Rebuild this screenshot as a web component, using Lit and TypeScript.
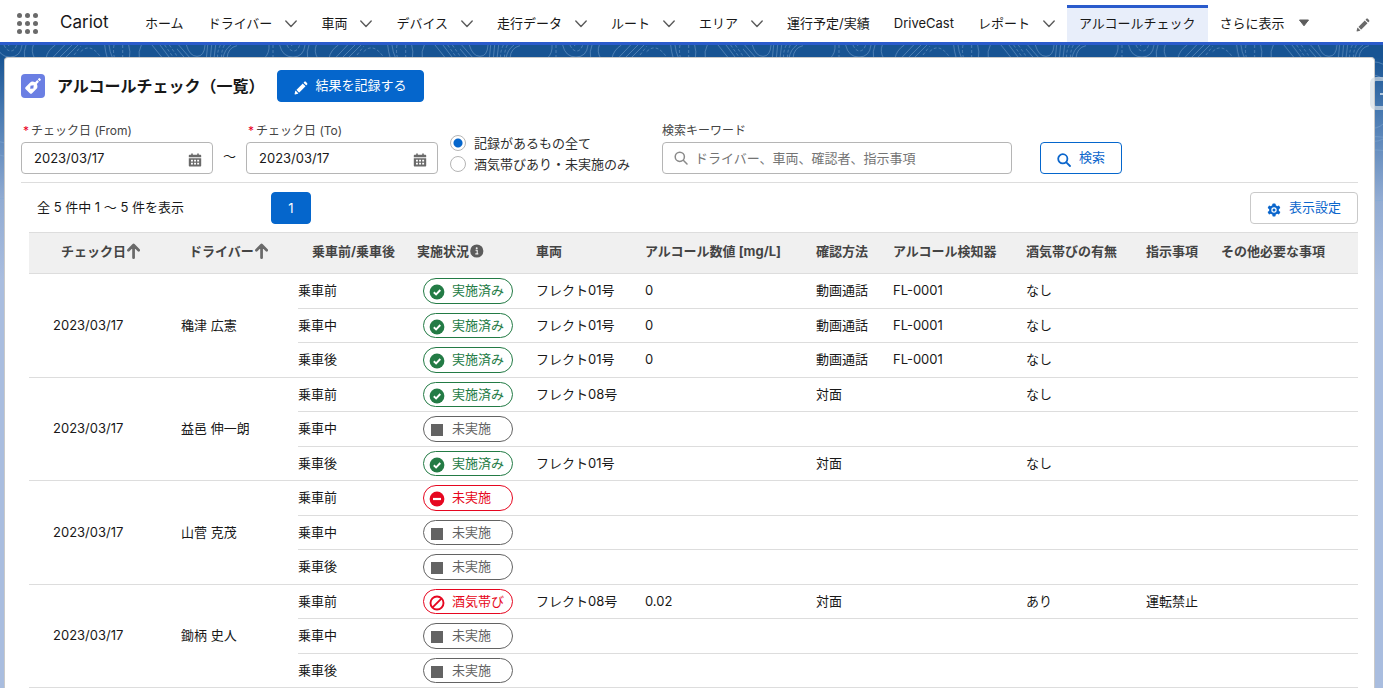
import { LitElement, html, css, svg, nothing } from "lit";
import { customElement, state } from "lit/decorators.js";

type Status = "done" | "none" | "missing" | "drunk";

interface Check {
  timing: string;
  status: Status;
  vehicle?: string;
  value?: string;
  method?: string;
  device?: string;
  drunk?: string;
  order?: string;
}

interface Group {
  date: string;
  driver: string;
  checks: Check[];
}

const STATUS_LABEL: Record<Status, string> = {
  done: "実施済み",
  none: "未実施",
  missing: "未実施",
  drunk: "酒気帯び",
};

const NAV: { label: string; menu?: boolean; active?: boolean }[] = [
  { label: "ホーム" },
  { label: "ドライバー", menu: true },
  { label: "車両", menu: true },
  { label: "デバイス", menu: true },
  { label: "走行データ", menu: true },
  { label: "ルート", menu: true },
  { label: "エリア", menu: true },
  { label: "運行予定/実績" },
  { label: "DriveCast" },
  { label: "レポート", menu: true },
  { label: "アルコールチェック", active: true },
];

const GROUPS: Group[] = [
  {
    date: "2023/03/17",
    driver: "穐津 広憲",
    checks: [
      { timing: "乗車前", status: "done", vehicle: "フレクト01号", value: "0", method: "動画通話", device: "FL-0001", drunk: "なし" },
      { timing: "乗車中", status: "done", vehicle: "フレクト01号", value: "0", method: "動画通話", device: "FL-0001", drunk: "なし" },
      { timing: "乗車後", status: "done", vehicle: "フレクト01号", value: "0", method: "動画通話", device: "FL-0001", drunk: "なし" },
    ],
  },
  {
    date: "2023/03/17",
    driver: "益邑 伸一朗",
    checks: [
      { timing: "乗車前", status: "done", vehicle: "フレクト08号", method: "対面", drunk: "なし" },
      { timing: "乗車中", status: "none" },
      { timing: "乗車後", status: "done", vehicle: "フレクト01号", method: "対面", drunk: "なし" },
    ],
  },
  {
    date: "2023/03/17",
    driver: "山菅 克茂",
    checks: [
      { timing: "乗車前", status: "missing" },
      { timing: "乗車中", status: "none" },
      { timing: "乗車後", status: "none" },
    ],
  },
  {
    date: "2023/03/17",
    driver: "鋤柄 史人",
    checks: [
      { timing: "乗車前", status: "drunk", vehicle: "フレクト08号", value: "0.02", method: "対面", drunk: "あり", order: "運転禁止" },
      { timing: "乗車中", status: "none" },
      { timing: "乗車後", status: "none" },
    ],
  },
];

const pencil = (cls: string) => html`<svg class=${cls} viewBox="0 0 52 52" aria-hidden="true">
  <path fill="currentColor" d="M9.5 33.4l8.9 8.9c.4.4 1 .4 1.4 0L42 20c.4-.4.4-1 0-1.4l-8.8-8.8c-.4-.4-1-.4-1.4 0L9.5 32.1c-.4.4-.4 1 0 1.3zM36.1 5.7c-.4.4-.4 1 0 1.4l8.8 8.8c.4.4 1 .4 1.4 0l2.5-2.5c1.6-1.5 1.6-3.9 0-5.5l-4.7-4.7c-1.6-1.6-4.1-1.6-5.7 0l-2.3 2.5zM2.1 48.2c-.2 1 .7 1.9 1.7 1.7l10.9-2.6c.4-.1.7-.3.9-.5l.2-.2c.2-.2.3-.9-.1-1.3l-9-9c-.4-.4-1.1-.3-1.3-.1l-.2.2c-.3.3-.4.6-.5.9L2.1 48.2z"/>
</svg>`;

const magnifier = (cls: string, weight: number) => html`<svg class=${cls} viewBox="0 0 14 14" aria-hidden="true">
  <g fill="none" stroke="currentColor" stroke-width=${weight} stroke-linecap="round">
    <circle cx="5.8" cy="5.8" r="4.6"/><path d="M9.3 9.3L13 13"/>
  </g>
</svg>`;

const calendar = html`<svg class="cal" viewBox="0 0 14 14" aria-hidden="true">
  <path fill="currentColor" d="M3.2.5h1.6v1.3h4.4V.5h1.6v1.3h1.4c.6 0 1 .4 1 1v1.4H.8V2.8c0-.6.4-1 1-1h1.4z"/>
  <path fill="currentColor" fill-rule="evenodd" d="M.8 5.3h12.4v7.2c0 .6-.4 1-1 1H1.8c-.6 0-1-.4-1-1zM3 6.8v1.7h1.9V6.8zm3.1 0v1.7H8V6.8zm3.1 0v1.7h1.9V6.8zM3 9.8v1.7h1.9V9.8zm3.1 0v1.7H8V9.8zm3.1 0v1.7h1.9V9.8z"/>
</svg>`;

const gear = html`<svg class="ico" viewBox="0 0 14 14" aria-hidden="true">
  <g fill="currentColor">
    ${[0, 60, 120].map((a) => svg`<rect x="5.4" y="0.4" width="3.2" height="13.2" rx="0.8" transform="rotate(${a} 7 7)"/>`)}
    <circle cx="7" cy="7" r="4.9"/>
  </g>
  <circle cx="7" cy="7" r="2.7" fill="#fff"/>
  <circle cx="7" cy="7" r="1.5" fill="currentColor"/>
</svg>`;

const chevron = html`<svg class="chev" viewBox="0 0 12 8" aria-hidden="true">
  <path d="M0.8 1L6 6.5L11.2 1" fill="none" stroke="currentColor" stroke-width="1.4" stroke-linecap="round" stroke-linejoin="round"/>
</svg>`;

const sortArrow = html`<svg class="sort" viewBox="0 0 12 14" aria-hidden="true">
  <path d="M6.500 12.800V2.200M2 6.300l4.500-4.500 4.500 4.500" fill="none" stroke="currentColor" stroke-width="2.400" stroke-linecap="round" stroke-linejoin="round"/>
</svg>`;

const info = html`<svg class="info" viewBox="0 0 14 14" aria-hidden="true">
  <circle cx="7.300" cy="7" r="6.600" fill="currentColor"/>
  <circle cx="7.200" cy="4.200" r="1" fill="#f0f0f0"/>
  <path d="M6 6.300h1.700v3.400M5.800 9.900h3" fill="none" stroke="#f0f0f0" stroke-width="1.100"/>
</svg>`;

const bottle = html`<svg class="object" viewBox="0 0 24 24" aria-hidden="true">
  <rect width="24" height="24" rx="4" fill="#6b7fe3"/>
  <g fill="#fff" transform="rotate(45 12 12)">
    <rect x="10.700" y="1.800" width="2.600" height="2.200" rx="0.600"/>
    <path d="M10.800 4.800h2.400v3c2.300.9 3.300 2.200 3.300 4v6c0 1-.6 1.600-1.600 1.600H9.100c-1 0-1.600-.6-1.600-1.600v-6c0-1.800 1-3.100 3.300-4z"/>
    <path d="M12 11l2 2.500-2 2.500-2-2.500z" fill="#6b7fe3"/>
  </g>
</svg>`;

const statusIcon = (s: Status) => {
  if (s === "done")
    return html`<svg class="mark" viewBox="0 0 16 16" aria-hidden="true"><circle cx="8" cy="8" r="7.4" fill="currentColor"/><path d="M4.800 8.200l2.300 2.200 4.200-4.400" fill="none" stroke="#fff" stroke-width="1.900"/></svg>`;
  if (s === "missing")
    return html`<svg class="mark" viewBox="0 0 16 16" aria-hidden="true"><circle cx="8" cy="8" r="7.400" fill="currentColor"/><path d="M4 8h8" stroke="#fff" stroke-width="2.200"/></svg>`;
  if (s === "drunk")
    return html`<svg class="mark" viewBox="0 0 16 16" aria-hidden="true"><circle cx="8" cy="8" r="6.500" fill="none" stroke="currentColor" stroke-width="1.900"/><path d="M3.600 12.400l8.800-8.800" stroke="currentColor" stroke-width="1.900"/></svg>`;
  return html`<svg class="mark" viewBox="0 0 16 16" aria-hidden="true"><rect x="2" y="2" width="12" height="12" fill="currentColor"/></svg>`;
};

/* Contour-line backdrop, one tile repeated across the page. */
const contours = html`<svg class="contours" aria-hidden="true">
  <defs>
    <pattern id="topo" width="849" height="900" patternUnits="userSpaceOnUse" patternTransform="translate(460 0) scale(0.3333)">
      <g fill="none" stroke="#7fa8d2" stroke-opacity="0.5" stroke-width="3">
        <path d="M-10 0L24 40M5 0L40 40M28 0Q38 34 60 34T84 0M92 0L88 40M104 0L100 40M116 0L111 40"/>
        <path d="M130 0Q120 20 122 40M142 0Q132 20 134 40" stroke-dasharray="9 6"/>
        <path d="M180 2Q152 8 150 40M162 0Q142 14 138 40M262 40Q278 24 276 0M308 0Q316 36 348 36T384 0M418 0Q410 20 422 40M396 0Q388 20 392 40"/>
        <path d="M288 0V40M330 0Q338 18 350 18T368 0M344 -6V8" stroke-dasharray="9 6"/>
        <path d="M456 40Q460 16 484 0M474 40L512 0M494 40L534 0M512 40L552 0"/>
        <path d="M540 30L560 4M560 20Q590 -10 622 40M660 0Q656 20 662 40M686 0V40" stroke-dasharray="9 6"/>
        <path d="M632 0Q634 20 640 40M645 0Q647 20 656 40M704 0Q710 20 706 40M742 0Q732 20 736 40M774 0L806 40M798 0L828 40"/>
        <path d="M812 0L840 40M826 0L854 40" stroke-dasharray="9 6"/>
        <ellipse cx="190" cy="170" rx="60" ry="80"/><ellipse cx="190" cy="170" rx="95" ry="120"/>
        <ellipse cx="640" cy="230" rx="110" ry="90"/><ellipse cx="640" cy="230" rx="150" ry="130"/>
        <ellipse cx="420" cy="380" rx="80" ry="60" stroke-dasharray="9 6"/><ellipse cx="60" cy="420" rx="130" ry="70"/>
        <path d="M0 300Q200 240 420 320T849 300M0 340Q200 280 420 360T849 340M0 500Q300 420 849 500"/>
      </g>
    </pattern>
  </defs>
  <rect width="100%" height="100%" fill="url(#topo)"/>
</svg>`;

@customElement("app-root")
export class AppRoot extends LitElement {
  @state() private scope = "all";

  static styles = css`
    :host {
      display: flex;
      flex-direction: column;
      position: relative;
      min-height: 100vh;
      overflow: hidden;
      background: #a9bddf linear-gradient(180deg, #185493 0, #185493 57px, #4678b0 110px, #92acd3 200px, #a9bddf 280px) no-repeat;
      color: #181818;
      font: 13px/20px Inter, "Noto Sans CJK JP", sans-serif;
    }
    * { box-sizing: border-box; }
    button, input { font: inherit; }
    button { cursor: pointer; }
    svg { display: block; flex: none; }
    .contours { position: absolute; left: 0; top: 45px; width: 100%; height: 240px; }

    .bar {
      position: relative;
      display: flex;
      height: 45px;
      background: #fff;
      border-bottom: 3px solid #2a5bcc;
      padding: 0 13px 0 17px;
      white-space: nowrap;
    }
    .launcher, .edit { border: 0; background: none; padding: 0; color: #6a6a6a; }
    .dots { width: 21px; height: 21px; margin-top: 5px; }
    .app { font-size: 17px; line-height: 45px; margin: 0 0 0 22px; font-weight: 400; width: 73px; }
    .nav { display: flex; flex: 1; margin: 0; padding: 5px 0 0; list-style: none; }
    .item { display: flex; align-items: center; padding: 0 12px 4px; border-top: 3px solid transparent; }
    .item.active { background: #e8eefa; border-color: #2a5bcc; }
    .link { color: inherit; text-decoration: none; line-height: 30px; }
    .drop { border: 0; background: none; padding: 2px 0 0; margin-left: 13px; color: #5c5c5c; }
    .chev { width: 12px; height: 8px; }
    .more { display: flex; align-items: center; gap: 13px; padding: 0; border: 0; background: none; color: inherit; }
    .tri { width: 12px; height: 8px; color: #5c5c5c; }
    .edit { padding-top: 7px; }
    .pen { width: 14px; height: 14px; }

    .card {
      position: relative;
      flex: 1;
      margin: 12px 8px 0 4px;
      padding: 12px 16px 0;
      background: #fff;
      border: 1px solid #c9c9c9;
      border-bottom: 0;
      border-radius: 4px 4px 0 0;
    }
    .head { display: flex; align-items: center; gap: 12px; }
    .object { width: 24px; height: 24px; }
    .title { font-size: 16px; line-height: 24px; font-weight: 700; margin: 0; }
    .btn {
      display: inline-flex;
      align-items: center;
      justify-content: center;
      gap: 8px;
      height: 32px;
      padding: 0 16px 2px;
      border: 1px solid #c9c9c9;
      border-radius: 4px;
      background: #fff;
      color: #0b66cc;
      white-space: nowrap;
    }
    .btn.brand { background: #0566cc; border-color: #0566cc; color: #fff; }
    .btn.outline { border-color: #0566cc; }
    .ico { width: 14px; height: 14px; margin-top: 5px; }

    .filters { display: flex; align-items: flex-end; padding: 18px 0 8px; border-bottom: 1px solid #dddddd; }
    .field { display: flex; flex-direction: column; }
    .label { font-size: 12px; line-height: 18px; padding-top: 2px; margin-bottom: 2px; color: #444; }
    .req { color: #ea001e; margin: 0 2px; }
    .box { position: relative; }
    .input {
      width: 192px;
      height: 32px;
      padding: 0 12px;
      border: 1px solid #b5b5b5;
      border-radius: 4px;
      background: #fff;
      color: #181818;
      display: block;
    }
    .input.wide { width: 350px; padding-left: 32px; }
    .input::placeholder { color: #747474; opacity: 1; }
    .pick { position: absolute; right: 11px; top: 11px; border: 0; padding: 0; background: none; color: #6a6a6a; }
    .cal { width: 14px; height: 14px; }
    .lens { position: absolute; left: 12px; top: 9px; width: 14px; height: 14px; color: #8a8a8a; }
    .tilde { width: 33px; text-align: center; line-height: 32px; padding-bottom: 2px; }
    .radios { border: 0; margin: 0 0 0 12px; padding: 0; width: 212px; }
    .radio { display: flex; align-items: center; gap: 8px; height: 21px; white-space: nowrap; color: #2e2e2e; }
    .dot {
      appearance: none;
      width: 16px;
      height: 16px;
      margin: 0;
      border: 1px solid #b5b5b5;
      border-radius: 50%;
      background: #fff;
    }
    .dot:checked { background: radial-gradient(circle, #0566cc 4px, #fff 5px); }
    .search { margin-left: 28px; }

    .pager { display: flex; align-items: center; padding: 9px 0 8px 16px; }
    .count { width: 234px; margin: 0; padding-bottom: 2px; }
    .page { width: 40px; padding: 0; }
    .settings { margin-left: auto; }

    .scroll { margin-left: 8px; }
    .table { width: 100%; table-layout: fixed; border-collapse: separate; border-spacing: 0; white-space: nowrap; }
    .w1 { width: 128px; }
    .w2 { width: 141px; }
    .w3 { width: 111px; }
    .w4 { width: 119px; }
    .w5 { width: 109px; }
    .w6 { width: 171px; }
    .w7 { width: 77px; }
    .w8 { width: 133px; }
    .w9 { width: 120px; }
    .w10 { width: 75px; }
    .th {
      height: 42px;
      padding: 0 8px 4px;
      text-align: left;
      font-weight: 700;
      color: #444;
      background: #f0f0f0;
      border: solid #dddddd;
      border-width: 1px 0;
    }
    .th.sorted { padding-left: 32px; }
    .th.mid { text-align: center; }
    .cap { display: flex; align-items: center; }
    .sort { width: 14px; height: 16px; color: #6a6a6a; }
    .info { width: 15px; height: 14px; color: #5c5c5c; }
    .row { height: 35px; }
    .row:nth-child(even) { height: 34px; }
    .td { padding: 0 8px 2px; border-bottom: 1px solid #dddddd; }
    .td.span { padding: 0 24px 2px; }
    .td.timing { padding: 0 0 2px; }
    .td.state { padding: 0 14px; }
    .badge {
      display: flex;
      align-items: center;
      gap: 7px;
      width: 90px;
      height: 26px;
      padding: 0 0 2px 5px;
      border: 1px solid currentColor;
      border-radius: 13px;
    }
    .row:nth-child(even) .badge { height: 25px; }
    .mark { width: 16px; height: 16px; margin-top: 4px; }
    .done { color: #237b45; }
    .none { color: #636363; }
    .missing, .drunk { color: #e60720; }

    .drawer {
      position: absolute;
      right: -19px;
      top: 77px;
      width: 32px;
      height: 33px;
      padding: 0;
      border: 4px solid rgba(214, 222, 230, 0.7);
      border-radius: 6px;
      background: none;
      color: #b5cbe0;
    }
    .grip { width: 12px; height: 12px; margin: 0 0 0 5px; }
  `;

  private renderNav() {
    return html`<header class="bar">
      <button class="launcher" aria-label="アプリケーションランチャー">
        <svg class="dots" viewBox="0 0 21 21"><g fill="currentColor">
          ${[2.5, 10.5, 18.5].map((y) => [2.5, 10.5, 18.5].map((x) => svg`<circle cx=${x} cy=${y} r="2.5"/>`))}
        </g></svg>
      </button>
      <h1 class="app">Cariot</h1>
      <ul class="nav">
        ${NAV.map(
          (n) => html`<li class="item ${n.active ? "active" : ""}">
            <a class="link" href="#">${n.label}</a>
            ${n.menu ? html`<button class="drop" aria-label=${n.label}>${chevron}</button>` : nothing}
          </li>`
        )}
        <li class="item">
          <button class="more">さらに表示
            <svg class="tri" viewBox="0 0 12 8" aria-hidden="true"><path d="M1.500 1h9L6 6.800z" fill="currentColor" stroke="currentColor" stroke-linejoin="round"/></svg>
          </button>
        </li>
      </ul>
      <button class="edit" aria-label="編集">${pencil("pen")}</button>
    </header>`;
  }

  private renderDate(id: string, label: string) {
    return html`<div class="field">
      <label class="label" for=${id}><span class="req">*</span>${label}</label>
      <div class="box">
        <input class="input" id=${id} type="text" value="2023/03/17" required />
        <button class="pick" aria-label="日付を選択">${calendar}</button>
      </div>
    </div>`;
  }

  private renderRadio(value: string, label: string) {
    return html`<label class="radio">
      <input class="dot" type="radio" name="scope" .checked=${this.scope === value} @change=${() => (this.scope = value)} />${label}
    </label>`;
  }

  private renderGroup(g: Group) {
    return g.checks.map(
      (c, i) => html`<tr class="row">
        ${i === 0
          ? html`<td class="td span" rowspan=${g.checks.length}>${g.date}</td>
              <td class="td span" rowspan=${g.checks.length}>${g.driver}</td>`
          : nothing}
        <td class="td timing">${c.timing}</td>
        <td class="td state"><span class="badge ${c.status}">${statusIcon(c.status)}${STATUS_LABEL[c.status]}</span></td>
        <td class="td">${c.vehicle}</td>
        <td class="td">${c.value}</td>
        <td class="td">${c.method}</td>
        <td class="td">${c.device}</td>
        <td class="td">${c.drunk}</td>
        <td class="td">${c.order}</td>
        <td class="td"></td>
      </tr>`
    );
  }

  render() {
    return html`
      ${contours} ${this.renderNav()}
      <main class="card">
        <div class="head">
          ${bottle}
          <h2 class="title">アルコールチェック（一覧）</h2>
          <button class="btn brand">${pencil("ico")}結果を記録する</button>
        </div>
        <div class="filters">
          ${this.renderDate("from", "チェック日 (From)")}
          <span class="tilde">〜</span>
          ${this.renderDate("to", "チェック日 (To)")}
          <fieldset class="radios" aria-label="表示対象">
            ${this.renderRadio("all", "記録があるもの全て")} ${this.renderRadio("alert", "酒気帯びあり・未実施のみ")}
          </fieldset>
          <div class="field">
            <label class="label" for="keyword">検索キーワード</label>
            <div class="box">
              <input class="input wide" id="keyword" type="text" placeholder="ドライバー、車両、確認者、指示事項" />
              ${magnifier("lens", 1.5)}
            </div>
          </div>
          <button class="btn outline search">${magnifier("ico", 1.8)}検索</button>
        </div>
        <div class="pager">
          <p class="count">全 5 件中 1 〜 5 件を表示</p>
          <button class="btn brand page">1</button>
          <button class="btn settings">${gear}表示設定</button>
        </div>
        <div class="scroll">
          <table class="table">
            <colgroup>
              ${[1, 2, 3, 4, 5, 6, 7, 8, 9, 10].map((n) => html`<col class="w${n}" />`)}
              <col />
            </colgroup>
            <thead>
              <tr>
                <th class="th sorted"><span class="cap">チェック日${sortArrow}</span></th>
                <th class="th sorted"><span class="cap">ドライバー${sortArrow}</span></th>
                <th class="th mid">乗車前/乗車後</th>
                <th class="th"><span class="cap">実施状況${info}</span></th>
                <th class="th">車両</th>
                <th class="th">アルコール数値 [mg/L]</th>
                <th class="th">確認方法</th>
                <th class="th">アルコール検知器</th>
                <th class="th">酒気帯びの有無</th>
                <th class="th">指示事項</th>
                <th class="th">その他必要な事項</th>
              </tr>
            </thead>
            <tbody>
              ${GROUPS.map((g) => this.renderGroup(g))}
            </tbody>
          </table>
        </div>
      </main>
      <button class="drawer" aria-label="パネルを開く">
        <svg class="grip" viewBox="0 0 12 12"><path d="M6 1v10M1 6h10" stroke="currentColor" stroke-width="2"/></svg>
      </button>
    `;
  }
}
